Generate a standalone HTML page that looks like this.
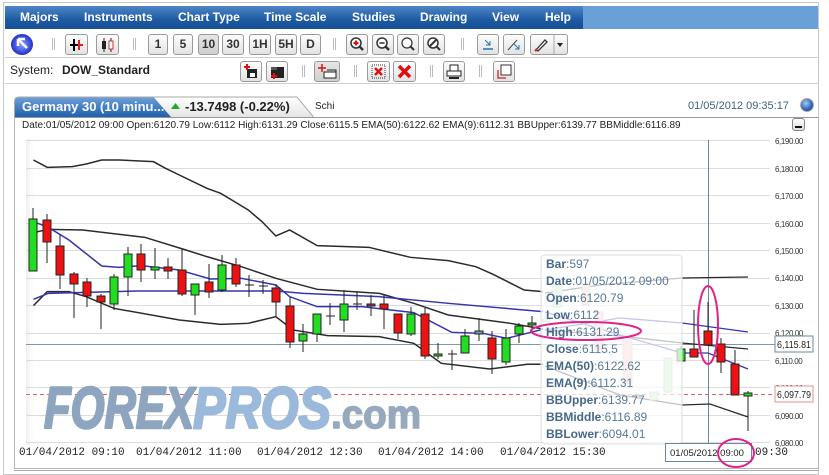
<!DOCTYPE html>
<html><head><meta charset="utf-8"><style>
*{margin:0;padding:0;box-sizing:border-box}
body{width:829px;height:475px;background:#fff;position:relative;overflow:hidden;font-family:"Liberation Sans",Arial,sans-serif}
.abs{position:absolute}
.menu{left:5px;top:6px;width:813px;height:23px;background:#6aa0d8}
.menu .dk{position:absolute;left:0;top:0;width:578px;height:23px;background:linear-gradient(#4f86c6,#1d5aa3 60%,#184f94)}
.mi{position:absolute;top:4px;color:#fff;font-weight:bold;font-size:12px}
.btn{position:absolute;height:21px;border:1px solid #9a9a9a;border-radius:3px;background:linear-gradient(#fdfdfd,#e2e2e2);font-size:12px;font-weight:bold;color:#333;text-align:center;line-height:19px}
.pr{background:linear-gradient(#e6e6e6,#cfcfcf)}
.sep{position:absolute;width:3px;height:12px;border-left:1px solid #bbb;border-right:1px solid #bbb}
.tt{font-size:12px;color:#587a98}
.tt b{color:#46688a}
</style></head><body>
<div class="abs" style="left:3px;top:2px;width:816px;height:473px;border:1px solid #c8c8c8"></div>
<div class="abs menu"><div class="dk"></div>
<span class="mi" style="left:15px">Majors</span>
<span class="mi" style="left:79px">Instruments</span>
<span class="mi" style="left:173px">Chart Type</span>
<span class="mi" style="left:259px">Time Scale</span>
<span class="mi" style="left:347px">Studies</span>
<span class="mi" style="left:415px">Drawing</span>
<span class="mi" style="left:487px">View</span>
<span class="mi" style="left:540px">Help</span>
</div>
<div class="abs" style="left:11px;top:34px;width:22px;height:21px;border-radius:50%;background:radial-gradient(#8fa0ff,#2233cc 70%,#6677ee);"></div>
<svg class="abs" style="left:11px;top:34px" width="22" height="21"><path d="M7 5 L7 12 M7 5 L14 5 M7 5 L16 14" stroke="#fff" stroke-width="2.5" fill="none"/></svg>
<div class="sep" style="left:52px;top:38px"></div>
<div class="btn" style="left:65px;top:34px;width:23px"><svg width="21" height="19"><path d="M4 10H10M8 4V16M10 10H17M13 5V15" stroke="#000" stroke-width="2"/><path d="M13 5V15M13 10H17" stroke="#d22" stroke-width="2"/></svg></div>
<div class="btn" style="left:96px;top:34px;width:23px"><svg width="21" height="19"><rect x="5" y="6" width="4" height="8" fill="#222"/><path d="M7 3V17M14 3V17" stroke="#222"/><rect x="12" y="6" width="4" height="8" fill="#fff" stroke="#c33"/></svg></div>
<div class="sep" style="left:133px;top:38px"></div>
<div class="btn" style="left:148px;top:34px;width:20px">1</div>
<div class="btn" style="left:173px;top:34px;width:20px">5</div>
<div class="btn pr" style="left:198px;top:34px;width:21px">10</div>
<div class="btn" style="left:222px;top:34px;width:22px">30</div>
<div class="btn" style="left:249px;top:34px;width:22px">1H</div>
<div class="btn" style="left:275px;top:34px;width:22px">5H</div>
<div class="btn" style="left:300px;top:34px;width:21px">D</div>
<div class="sep" style="left:333px;top:38px"></div>
<div class="btn" style="left:346px;top:34px;width:22px"><svg width="20" height="19"><circle cx="9" cy="8" r="5" fill="#fff" stroke="#333" stroke-width="1.5"/><path d="M12 11L16 15" stroke="#333" stroke-width="2.5"/><path d="M6.5 8H11.5M9 5.5V10.5" stroke="#d11" stroke-width="2"/></svg></div>
<div class="btn" style="left:372px;top:34px;width:22px"><svg width="20" height="19"><circle cx="9" cy="8" r="5" fill="#fff" stroke="#333" stroke-width="1.5"/><path d="M12 11L16 15" stroke="#333" stroke-width="2.5"/><path d="M6.5 8H11.5" stroke="#333" stroke-width="1.5"/></svg></div>
<div class="btn" style="left:397px;top:34px;width:22px"><svg width="20" height="19"><circle cx="9" cy="8" r="5" fill="#fff" stroke="#333" stroke-width="1.2"/><path d="M12 11L16 15" stroke="#333" stroke-width="2"/></svg></div>
<div class="btn" style="left:423px;top:34px;width:22px"><svg width="20" height="19"><circle cx="9" cy="8" r="5" fill="#fff" stroke="#333" stroke-width="1.5"/><path d="M12 11L16 15M6 11L12 5" stroke="#333" stroke-width="2"/></svg></div>
<div class="sep" style="left:461px;top:38px"></div>
<div class="btn" style="left:477px;top:34px;width:22px"><svg width="20" height="19"><path d="M5 14H15" stroke="#27a" stroke-width="1.5"/><path d="M7 5L12 10M8 10H12V6" stroke="#27a" fill="none"/></svg></div>
<div class="btn" style="left:503px;top:34px;width:22px"><svg width="20" height="19"><path d="M4 15L13 5" stroke="#444"/><path d="M10 9L15 14M11 14H15V10" stroke="#27a" fill="none"/></svg></div>
<div class="btn" style="left:530px;top:34px;width:38px;text-align:left"><svg width="36" height="19"><path d="M5 15L14 5L16 7L7 16Z" fill="#fff" stroke="#333" stroke-width="1.3"/><path d="M4 16L6 14" stroke="#c22" stroke-width="2"/><path d="M23 0V19" stroke="#aaa"/><path d="M26 8H32L29 12Z" fill="#222"/></svg></div>
<div class="abs" style="left:5px;top:57px;width:813px;height:1px;background:#cfcfcf"></div>
<div class="abs" style="left:10px;top:63px;font-size:12px;color:#222">System:</div>
<div class="abs" style="left:62px;top:63px;font-size:12px;font-weight:bold;color:#222">DOW_Standard</div>
<div class="btn" style="left:240px;top:61px;width:22px"><svg width="20" height="19"><rect x="6" y="7" width="10" height="9" fill="#222"/><rect x="9" y="11" width="5" height="4" fill="#fff"/><path d="M3 5H9M6 2V8" stroke="#d11" stroke-width="2"/></svg></div>
<div class="btn" style="left:266px;top:61px;width:22px"><svg width="20" height="19"><rect x="4" y="5" width="13" height="11" fill="#222"/><rect x="4" y="5" width="6" height="3" fill="#555"/><path d="M4 14H10M7 11V17" stroke="#d11" stroke-width="2"/></svg></div>
<div class="sep" style="left:302px;top:65px"></div>
<div class="btn pr" style="left:314px;top:61px;width:26px"><svg width="24" height="19"><path d="M3 6H11M7 2V10" stroke="#d11" stroke-width="1.5"/><rect x="9" y="10" width="12" height="6" fill="#fff" stroke="#222"/><path d="M12 8H21V14" stroke="#222" fill="none"/></svg></div>
<div class="sep" style="left:354px;top:65px"></div>
<div class="btn" style="left:367px;top:61px;width:23px"><svg width="21" height="19"><rect x="4" y="3" width="13" height="13" fill="none" stroke="#333" stroke-dasharray="1 1"/><path d="M7 6L14 13M14 6L7 13" stroke="#d11" stroke-width="2.5"/></svg></div>
<div class="btn" style="left:393px;top:61px;width:23px"><svg width="21" height="19"><path d="M5 4L16 15M16 4L5 15" stroke="#d11" stroke-width="3.5"/></svg></div>
<div class="sep" style="left:430px;top:65px"></div>
<div class="btn" style="left:443px;top:61px;width:22px"><svg width="20" height="19"><rect x="6" y="3" width="8" height="7" fill="#fff" stroke="#222"/><rect x="3" y="9" width="14" height="5" fill="#fff" stroke="#222"/><path d="M5 16H15" stroke="#222" stroke-width="2"/></svg></div>
<div class="sep" style="left:479px;top:65px"></div>
<div class="btn" style="left:493px;top:61px;width:22px"><svg width="20" height="19"><rect x="7" y="3" width="10" height="10" fill="#fff" stroke="#333"/><path d="M4 8V16H12" stroke="#c22" fill="none" stroke-width="1.3"/></svg></div>
<div class="abs" style="left:5px;top:83px;width:813px;height:1px;background:#cfcfcf"></div>
<svg class="abs" style="left:14px;top:96px" width="300" height="22"><defs><linearGradient id="tb" x1="0" y1="0" x2="0" y2="1"><stop offset="0" stop-color="#6d9fd6"/><stop offset="1" stop-color="#1f5fad"/></linearGradient><linearGradient id="tg" x1="0" y1="0" x2="0" y2="1"><stop offset="0" stop-color="#fff"/><stop offset="1" stop-color="#e4e4e4"/></linearGradient></defs>
<path d="M0.5 21.5V5Q0.5 1 5 1H283L300 21.5" fill="url(#tg)" stroke="#aaa"/>
<path d="M1 21V5Q1 1.5 5 1.5H140L157 21Z" fill="url(#tb)"/></svg>
<div class="abs" style="left:22px;top:99px;font-size:13px;font-weight:bold;color:#fff">Germany 30 (10 minu...</div>
<svg class="abs" style="left:170px;top:101px" width="12" height="10"><path d="M1 8H10L5.5 2Z" fill="#2a2"/></svg>
<div class="abs" style="left:185px;top:99px;font-size:13px;font-weight:bold;color:#222">-13.7498 (-0.22%)</div>
<div class="abs" style="left:315px;top:101px;font-size:10px;color:#222">Schi</div>
<div class="abs" style="left:688px;top:100px;font-size:11px;color:#3f6282">01/05/2012 09:35:17</div>
<div class="abs" style="left:800px;top:98px;width:14px;height:14px;border-radius:50%;background:radial-gradient(circle at 40% 35%,#a9c9f0,#2a62b8 60%,#1a3f80);border:1px solid #aaa"></div>
<div class="abs" style="left:14px;top:117px;width:805px;height:352px;border:1px solid #b5b5b5;border-top:1px solid #999"></div>
<div class="abs" style="left:22px;top:120px;font-size:10px;color:#222;white-space:nowrap">Date:01/05/2012 09:00 Open:6120.79 Low:6112 High:6131.29 Close:6115.5 EMA(50):6122.62 EMA(9):6112.31 BBUpper:6139.77 BBMiddle:6116.89</div>
<div class="abs" style="left:792px;top:118px;width:13px;height:13px;border:1px solid #888;border-radius:3px;background:linear-gradient(#fff,#ddd)"><div style="position:absolute;left:2px;top:7px;width:7px;height:2px;background:#111"></div></div>
<div class="abs" style="left:14px;top:470px;width:805px;height:5px;border-top:1px solid #aaa"></div>
<svg class="abs" style="left:0;top:0" width="829" height="475">
<defs><linearGradient id="lf" x1="0" x2="1"><stop offset="0" stop-color="#eee"/><stop offset="1" stop-color="#fff" stop-opacity="0"/></linearGradient></defs>
<rect x="26" y="139" width="10" height="306" fill="url(#lf)"/>
<g stroke="#dcdcdc" stroke-width="1">
<path d="M26 140.5H770M26 168.5H770M26 195.5H770M26 223.5H770M26 250.5H770M26 278.5H770M26 305.5H770M26 333.5H770M26 360.5H770M26 387.5H770M26 415.5H770M26 442.5H770"/></g>
<path d="M26 344.5H775" stroke="#7f98aa"/>
<path d="M26 394.5H775" stroke="#e06060" stroke-dasharray="4 3"/>
<path d="M708.5 140V445" stroke="#6d8699"/>
<g font-family="Liberation Sans" font-weight="bold" font-style="italic" stroke-width="2.5" stroke-linejoin="round">
<text x="44" y="428" font-size="58" textLength="150" lengthAdjust="spacingAndGlyphs" fill="#8ea5bf" stroke="#8ea5bf">FOREX</text>
<text x="193" y="428" font-size="58" textLength="138" lengthAdjust="spacingAndGlyphs" fill="#9bb9da" stroke="#9bb9da">PROS</text>
<text x="331" y="428" font-size="40" font-style="normal" textLength="90" lengthAdjust="spacingAndGlyphs" fill="#97a9bd" stroke="#97a9bd" stroke-width="1.5">.com</text>
</g>
<g transform="translate(0,130) scale(0.3448,0.3333)" fill="none" stroke-width="4.5">
<polyline stroke="#2b2b2b" points="97,90 137,112 210,110 250,102 295,90 345,90 445,95 480,115 520,135 600,175 640,190 680,215 720,240 760,275 800,318 840,300 920,347 1070,352 1190,382 1300,392 1380,410 1430,433 1520,480 1575,485"/>
<polyline stroke="#2b2b2b" points="97,308 140,298 240,300 420,322 530,357 600,380 700,410 800,445 920,478 1100,490 1200,520 1300,555 1480,580 1575,597"/>
<polyline stroke="#2b2b2b" points="97,527 137,485 200,485 250,500 330,535 520,570 640,583 720,580 800,560 850,600 950,617 1100,620 1200,640 1280,700 1420,717 1530,703 1575,703"/>
<polyline stroke="#3535b0" points="97,275 140,292 200,330 295,408 345,412 410,407 520,420 610,447 700,445 800,465 840,500 920,530 1050,530 1200,548 1310,607 1400,610 1470,625 1575,598"/>
<polyline stroke="#3535b0" points="97,508 140,490 400,483 800,483 880,490 1100,500 1300,520 1575,545"/>
</g>
<g fill="none" stroke-width="1.3">
<polyline stroke="#2b2b2b" points="545,293 600,285 682,278 748,277"/>
<polyline stroke="#2b2b2b" points="545,330 620,336 682,343 748,349"/>
<polyline stroke="#2b2b2b" points="545,366 620,395 682,405 710,404 748,417"/>
<polyline stroke="#3535b0" points="545,330 620,318 682,323 748,332"/>
<polyline stroke="#3535b0" points="545,312 620,335 682,353 708,353 748,369"/>
</g>
<g stroke="#222" stroke-width="1">
<path d="M33 208V271M47 214V263M60 235V289M74 272V318M87 278V307M101 294V329M114 274V310M128 247V296M141 244V282M155 248V279M168 258V279M182 249V296M195 284V315M209 264V298M222 255V292M236 258V287M249 275V297M263 280V294M276 284V317M290 297V348M303 324V352M317 314V342M330 303V325M344 290V332M357 291V310M371 295V316M384 294V329M398 314V339M411 307V336M425 308V359M438 343V359M452 350V370M465 329V353M479 318V341M492 331V374M506 329V365M519 323V343M532 316V333M681 346V361M694 310V357M708 302V345M721 338V373M735 350V395M748 391V431"/>
<path d="M245 285H254M259 286H268M326 316H335M353 304H362M448 354H457"/>
</g>
<g stroke="#222" stroke-width="1">
<g fill="#22dd22">
<rect x="29" y="219" width="8" height="52"/><rect x="110" y="277" width="8" height="27"/><rect x="124" y="254" width="8" height="23"/><rect x="151" y="267" width="8" height="3"/><rect x="191" y="284" width="8" height="11"/><rect x="218" y="265" width="8" height="25"/><rect x="299" y="334" width="8" height="7"/><rect x="313" y="314" width="8" height="20"/><rect x="340" y="304" width="8" height="16"/><rect x="407" y="314" width="8" height="20"/><rect x="434" y="354" width="8" height="2"/><rect x="461" y="336" width="8" height="17"/><rect x="502" y="338" width="8" height="24"/><rect x="515" y="326" width="8" height="8"/><rect x="528" y="323" width="8" height="2"/><rect x="677" y="349" width="8" height="12"/><rect x="744" y="393" width="8" height="3"/>
<rect x="475" y="331" width="8" height="3" fill="#5aa"/>
</g>
<g fill="#ee1111">
<rect x="43" y="220" width="8" height="22"/><rect x="56" y="246" width="8" height="29"/><rect x="70" y="274" width="8" height="10"/><rect x="83" y="282" width="8" height="14"/><rect x="97" y="296" width="8" height="6"/><rect x="137" y="254" width="8" height="16"/><rect x="164" y="267" width="8" height="4"/><rect x="178" y="270" width="8" height="24"/><rect x="205" y="282" width="8" height="10"/><rect x="232" y="265" width="8" height="19"/><rect x="272" y="288" width="8" height="14"/><rect x="286" y="306" width="8" height="36"/><rect x="367" y="304" width="8" height="2" fill="#a2336a"/><rect x="380" y="304" width="8" height="5"/><rect x="394" y="314" width="8" height="19"/><rect x="421" y="314" width="8" height="42"/><rect x="488" y="338" width="8" height="21"/><rect x="690" y="349" width="8" height="8"/><rect x="704" y="331" width="8" height="14"/><rect x="717" y="344" width="8" height="18"/><rect x="731" y="364" width="8" height="31"/>
</g></g>
<g stroke="#bbb">
<rect x="553" y="285" width="9" height="22" fill="#bfe8bf"/><rect x="582" y="283" width="8" height="22" fill="#f4c4c4"/><rect x="595" y="312" width="8" height="38" fill="#f4c4c4"/><rect x="623" y="340" width="9" height="43" fill="#f4c4c4"/><rect x="650" y="392" width="8" height="8" fill="#bfe8bf"/><rect x="664" y="358" width="8" height="34" fill="#bfe8bf"/><rect x="542" y="319" width="8" height="3" fill="#bfe8bf"/>
</g>
<rect x="541" y="255" width="141" height="189" rx="4" fill="#fff" fill-opacity="0.72" stroke="#ddd"/>
<g font-family="Liberation Sans" font-size="8" fill="#333" letter-spacing="-0.4">
<text x="775" y="144">6,190.00</text><text x="775" y="172">6,180.00</text><text x="775" y="199">6,170.00</text><text x="775" y="227">6,160.00</text><text x="775" y="254">6,150.00</text><text x="775" y="281">6,140.00</text><text x="775" y="309">6,130.00</text><text x="775" y="336">6,120.00</text><text x="775" y="364">6,110.00</text><text x="775" y="391">6,100.00</text><text x="775" y="419">6,090.00</text><text x="775" y="446">6,080.00</text>
</g>
<rect x="775" y="336" width="38" height="16" fill="#fff" stroke="#6d8b99"/>
<text x="777" y="348" font-family="Liberation Sans" font-size="10" fill="#222" textLength="34" lengthAdjust="spacingAndGlyphs">6,115.81</text>
<rect x="775" y="386" width="38" height="16" fill="#fff" stroke="#e09090"/>
<text x="777" y="398" font-family="Liberation Sans" font-size="10" fill="#222" textLength="34" lengthAdjust="spacingAndGlyphs">6,097.79</text>
<g font-family="Liberation Mono" font-size="11" fill="#222">
<text x="19" y="455">01/04/2012 09:10</text><text x="136" y="455">01/04/2012 11:00</text><text x="257" y="455">01/04/2012 12:30</text><text x="378" y="455">01/04/2012 14:00</text><text x="500" y="455">01/04/2012 15:30</text><text x="755" y="455">09:30</text>
</g>
<rect x="665.5" y="443.5" width="86" height="18" fill="#fff" stroke="#6d8699"/>
<text x="670" y="456" font-family="Liberation Sans" font-size="9.5" fill="#222">01/05/2012 09:00</text>
<g fill="none" stroke="#e0228a" stroke-width="2">
<ellipse cx="708" cy="325" rx="10" ry="39"/>
<ellipse cx="736" cy="453" rx="18" ry="14"/>
</g>
</svg>
<div class="abs tt" style="left:546px;top:256px;line-height:17px;white-space:nowrap">
<b>Bar</b>:597<br><b>Date</b>:01/05/2012 09:00<br><b>Open</b>:6120.79<br><b>Low</b>:6112<br><b>High</b>:6131.29<br><b>Close</b>:6115.5<br><b>EMA(50)</b>:6122.62<br><b>EMA(9)</b>:6112.31<br><b>BBUpper</b>:6139.77<br><b>BBMiddle</b>:6116.89<br><b>BBLower</b>:6094.01
</div>
<svg class="abs" style="left:520px;top:310px" width="130" height="45"><ellipse cx="66" cy="21" rx="55" ry="9" fill="none" stroke="#e0228a" stroke-width="2"/></svg>
</body></html>
